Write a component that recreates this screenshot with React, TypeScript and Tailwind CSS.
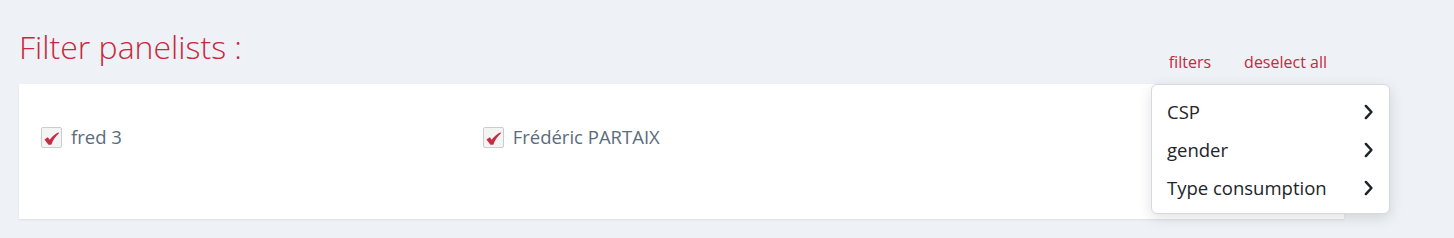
import React from "react";

function Check() {
  return (
    <svg viewBox="0 0 16 14" className="w-[15px] h-[13px] mt-[3px]">
      <path
        d="M0.4 8.1 L4 5.7 L6.1 8.4 C8.6 4.9 11.6 2.1 15.6 0.2 L15.9 1.6 C12.4 4.6 9.7 8.5 7.8 13.7 L4.7 13.7 Z"
        fill="#c52b41"
      />
    </svg>
  );
}

function Box({ label }: { label: string }) {
  return (
    <label className="flex items-center gap-[9px]">
      <span className="w-[21px] h-[21px] border border-[#cccccc] bg-[#f4f4f4] rounded-[2px] flex items-center justify-center">
        <Check />
      </span>
      <span className="text-[18.5px] leading-[24px] text-[#5b6b7d]">{label}</span>
    </label>
  );
}

function Chevron() {
  return (
    <svg viewBox="0 0 12 18" className="w-[11px] h-[16px]" fill="none" stroke="#1f2326" strokeWidth="2.8" strokeLinecap="round" strokeLinejoin="round">
      <path d="M3 2.2 L9.3 9 L3 15.8" />
    </svg>
  );
}

export default function App() {
  const items = ["CSP", "gender", "Type consumption"];
  return (
    <div className="relative w-[1454px] h-[238px] bg-[#eef1f5] font-['Open_Sans','Noto_Sans',sans-serif] overflow-hidden">
      <div className="w-[1325px] ml-[19px] pt-[27px]">
        <div className="flex justify-between h-[57px]">
          <h1 className="text-[32px] leading-[40px] font-light text-[#c8283f]">Filter panelists :</h1>
          <div className="flex gap-[33px] pr-[17px] pt-[24px] text-[16px] text-[#c8283f] leading-[22px]">
            <span>filters</span>
            <span>deselect all</span>
          </div>
        </div>
        <div className="bg-white h-[135px] shadow-[0_1px_2px_rgba(0,0,0,0.08)] grid grid-cols-3 pt-[41px] items-start">
          <div className="px-[22px]"><Box label="fred 3" /></div>
          <div className="px-[22px]"><Box label="Frédéric PARTAIX" /></div>
        </div>
      </div>
      <div className="absolute left-[1151px] top-[84px] w-[239px] bg-white rounded-[6px] border border-[#d6d9dd] shadow-[0_4px_14px_rgba(0,0,0,0.12)] pt-[8px] pb-[6px] z-10">
        {items.map((t) => (
          <div key={t} className="h-[38px] flex items-center justify-between pl-[15px] pr-[15px] text-[18.5px] text-[#212529]">
            <span>{t}</span>
            <Chevron />
          </div>
        ))}
      </div>
    </div>
  );
}
